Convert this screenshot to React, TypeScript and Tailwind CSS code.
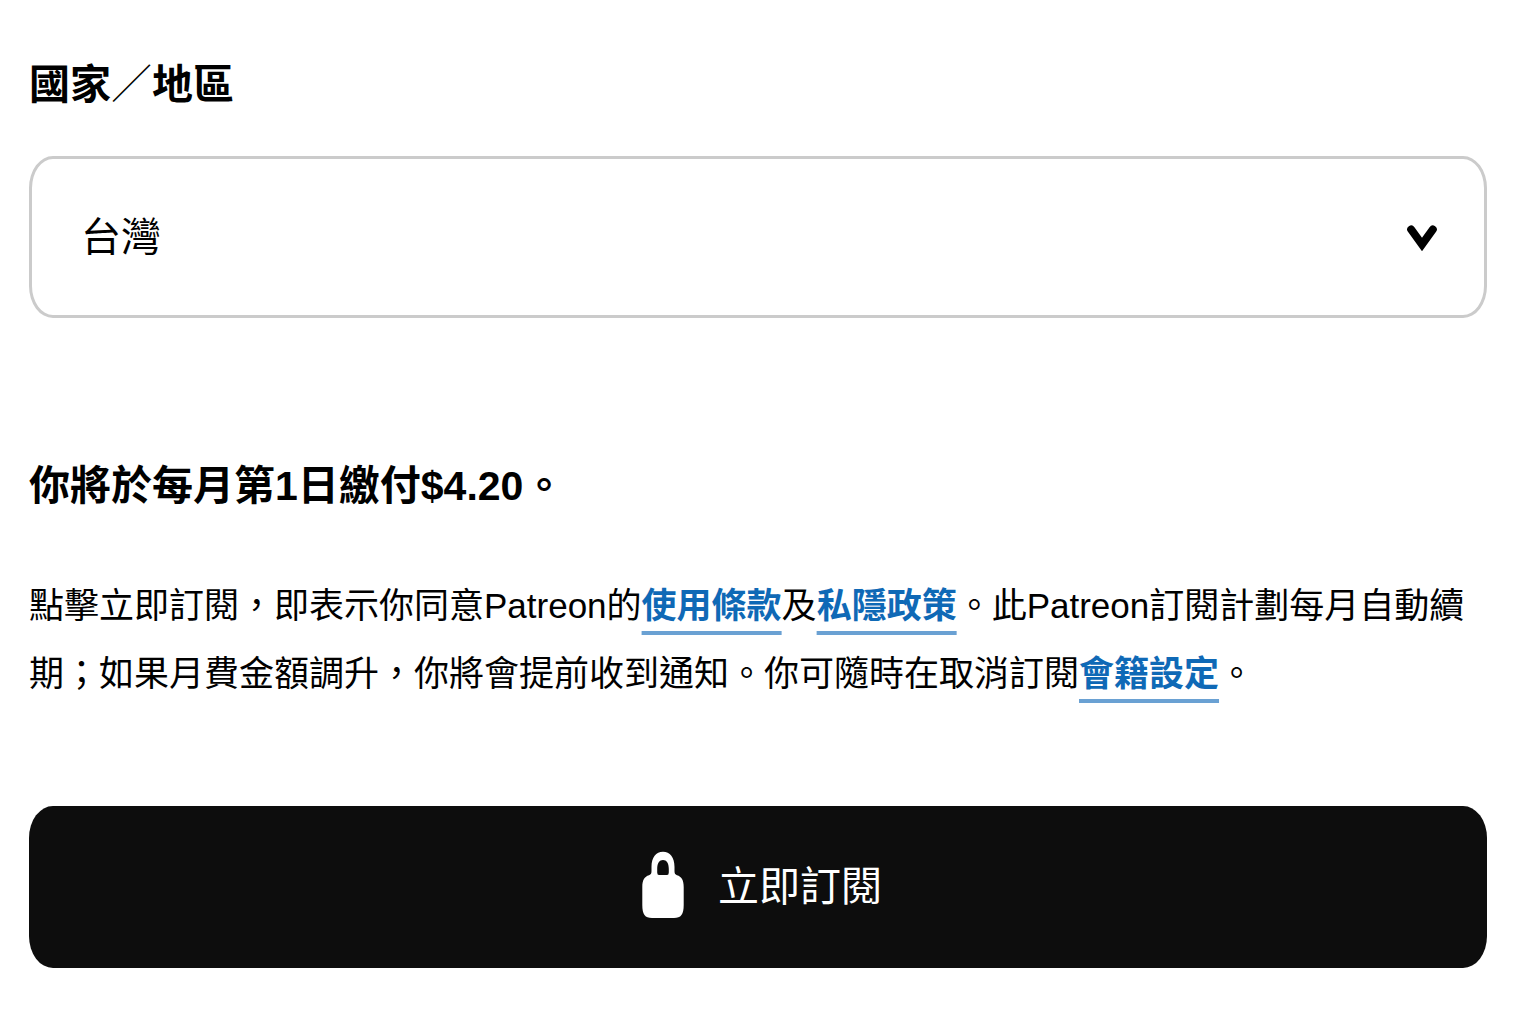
import React from "react";

function ChevronIcon() {
  return (
    <svg
      className="pointer-events-none absolute top-1/2 right-12 size-8 -translate-y-1/2"
      viewBox="0 0 32 32"
      fill="none"
      stroke="#000"
      strokeWidth="8"
      strokeLinecap="round"
      aria-hidden="true"
    >
      <path d="M4.200 8.500 L15 23.500 L25.800 8.500" />
    </svg>
  );
}

function LockIcon() {
  return (
    <svg className="h-[72px] w-14" viewBox="0 0 56 72" fill="#fff" aria-hidden="true">
      <path
        fillRule="evenodd"
        d="M17.500 20 V16 C17.500 6.500 22 .8 29 .8 C36 .8 40.500 6.500 40.500 16 V20 C40.500 22.500 41 23.500 43 24.200 C47.500 25.500 49.700 29 49.700 36 V54 C49.700 63.500 47 67 40 67 H18 C11 67 8.300 63.500 8.300 54 V36 C8.300 29 10.500 25.500 15 24.200 C17 23.500 17.500 22.500 17.500 20 Z M25 24 H33 Q34.800 24 34.800 21.500 V18 C34.800 12 32.500 9 29 9 C25.500 9 23.200 12 23.200 18 V21.500 Q23.200 24 25 24 Z"
      />
    </svg>
  );
}

function TextLink({ children }: { children: React.ReactNode }) {
  return (
    <a
      href="#"
      className="font-bold text-[#0f69b6] underline decoration-[#6aa1d3] decoration-4 underline-offset-[13px] [text-decoration-skip-ink:none]"
    >
      {children}
    </a>
  );
}

export default function App() {
  return (
    <main
      lang="zh-Hant-TW"
      className="min-h-screen bg-white pt-[55px] pr-[49px] pb-14 pl-[29px] font-['Liberation_Sans','Noto_Sans_CJK_TC',sans-serif] text-black"
    >
      {/* country */}
      <label htmlFor="country" className="block text-[41px] leading-[60px] font-bold">
        國家<span className="font-light">／</span>地區
      </label>
      <div className="relative mt-[41px]">
        <select
          id="country"
          defaultValue="TW"
          className="block w-full appearance-none rounded-[24px/32px] border-[3px] border-[#cbcbcb] bg-white px-[49px] py-12 text-[40px] leading-[60px]"
        >
          <option value="TW">台灣</option>
        </select>
        <ChevronIcon />
      </div>

      {/* billing summary */}
      <h2 className="mt-[138px] text-[41px] leading-[60px] font-bold">
        你將於每月第1日繳付$4.20。
      </h2>
      <p className="mt-14 text-[35px] leading-[68px]">
        點擊立即訂閱，即表示你同意Patreon的<TextLink>使用條款</TextLink>及
        <TextLink>私隱政策</TextLink>
        。此Patreon訂閱計劃每月自動續期；如果月費金額調升，你將會提前收到通知。你可隨時在取消訂閱
        <TextLink>會籍設定</TextLink>。
      </p>

      <button
        type="button"
        className="mt-[98px] flex w-full items-center justify-center gap-7 rounded-[24px/32px] bg-[#0d0d0d] py-[45px] text-[41px] leading-[60px] text-white"
      >
        <LockIcon />
        立即訂閱
      </button>
    </main>
  );
}
